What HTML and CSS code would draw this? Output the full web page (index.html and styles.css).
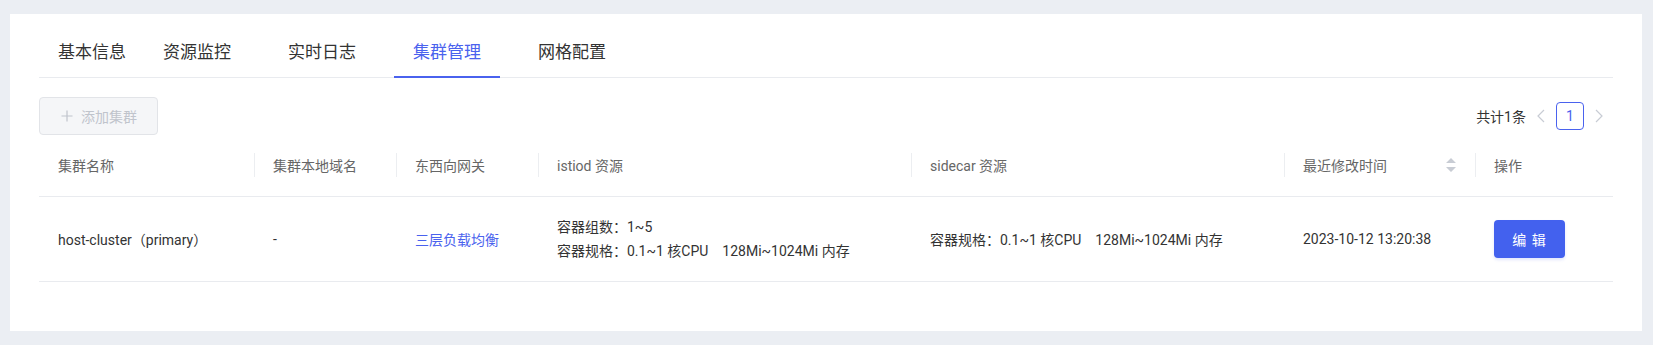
FILE: index.html
```html
<!DOCTYPE html>
<html lang="zh-CN">
<head>
<meta charset="utf-8">
<title>集群管理</title>
<link rel="stylesheet" href="styles.css">
</head>
<body>
<div class="card">
  <div class="tabs">
    <div class="tab">基本信息</div>
    <div class="tab">资源监控</div>
    <div class="tab">实时日志</div>
    <div class="tab active">集群管理</div>
    <div class="tab">网格配置</div>
  </div>
  <div class="toolbar">
    <button class="add-btn" disabled>
      <svg class="plus" width="12" height="12" viewBox="0 0 12 12"><path d="M6 0.5V11.5M0.5 6H11.5" stroke="#c0c4cc" stroke-width="1.2" fill="none"/></svg>
      <span>添加集群</span>
    </button>
    <div class="pager">
      <span class="total">共计1条</span>
      <svg class="chev" width="8" height="14" viewBox="0 0 8 14"><path d="M7 1L1 7L7 13" stroke="#c8ccd4" stroke-width="1.2" fill="none"/></svg>
      <span class="page-num">1</span>
      <svg class="chev" width="8" height="14" viewBox="0 0 8 14"><path d="M1 1L7 7L1 13" stroke="#c8ccd4" stroke-width="1.2" fill="none"/></svg>
    </div>
  </div>
  <table class="grid">
    <colgroup>
      <col class="c1"><col class="c2"><col class="c3"><col class="c4"><col class="c5"><col class="c6"><col class="c7">
    </colgroup>
    <thead>
      <tr>
        <th>集群名称</th>
        <th class="sep">集群本地域名</th>
        <th class="sep">东西向网关</th>
        <th class="sep">istiod 资源</th>
        <th class="sep">sidecar 资源</th>
        <th class="sep"><div class="sortable"><span>最近修改时间</span><svg class="sort" width="10" height="14" viewBox="0 0 10 14"><path d="M5 0L10 5H0Z M0 9H10L5 14Z" fill="#c8ccd4"/></svg></div></th>
        <th class="sep">操作</th>
      </tr>
    </thead>
    <tbody>
      <tr>
        <td>host-cluster（primary）</td>
        <td>-</td>
        <td><a class="link">三层负载均衡</a></td>
        <td><div class="lines"><div>容器组数：1~5</div><div>容器规格：0.1~1 核CPU<span class="mem">128Mi~1024Mi 内存</span></div></div></td>
        <td>容器规格：0.1~1 核CPU<span class="mem">128Mi~1024Mi 内存</span></td>
        <td>2023-10-12 13:20:38</td>
        <td><button class="edit-btn">编 辑</button></td>
      </tr>
    </tbody>
  </table>
</div>
</body>
</html>
```

FILE: styles.css
```css
* { box-sizing: border-box; }
html, body { margin: 0; padding: 0; }
body {
  background: #ebeef3;
  padding: 14px 11px 14px 10px;
  font-family: Roboto, "Noto Sans CJK SC", sans-serif;
  font-size: 14px;
  color: #333;
}
.card {
  background: #fff;
  height: 317px;
  padding: 14px 29px 0 29px;
}
.tabs {
  display: flex;
  gap: 19px;
  border-bottom: 1px solid #e9ebef;
}
.tab {
  height: 50px;
  line-height: 48px;
  padding: 0 19px;
  font-size: 17px;
  color: #333;
  border-bottom: 2px solid transparent;
  margin-bottom: -1px;
}
.tab:first-child { margin-right: -20px; }
.tab.active {
  color: #4a62ee;
  border-bottom-color: #4a62ee;
}
.toolbar {
  margin-top: 19px;
  height: 38px;
  display: flex;
  align-items: center;
  justify-content: space-between;
}
.add-btn {
  height: 38px;
  display: flex;
  align-items: center;
  padding: 0 20px 0 21px;
  background: #f5f6f8;
  border: 1px solid #e2e4e8;
  border-radius: 4px;
  color: #c0c4cc;
  font-family: inherit;
  font-size: 14px;
}
.add-btn .plus { margin-right: 8px; }
.pager {
  display: flex;
  align-items: center;
  gap: 11px;
  padding-right: 10px;
}
.total { font-size: 14px; color: #333; }
.page-num {
  width: 28px;
  height: 28px;
  border: 1px solid #4a62ee;
  border-radius: 4px;
  color: #4a62ee;
  display: flex;
  align-items: center;
  justify-content: center;
  font-size: 14px;
}
.grid {
  width: 100%;
  table-layout: fixed;
  border-collapse: collapse;
}
.c1 { width: 215px; }
.c2 { width: 142px; }
.c3 { width: 142px; }
.c4 { width: 373px; }
.c5 { width: 373px; }
.c6 { width: 191px; }
.c7 { width: 138px; }
.grid th {
  height: 61px;
  text-align: left;
  font-weight: normal;
  color: #666;
  padding: 0 19px;
  border-bottom: 1px solid #e9ebef;
  position: relative;
}
.grid th.sep::before {
  content: "";
  position: absolute;
  left: 0;
  top: 18px;
  height: 24px;
  width: 1px;
  background: #eceef1;
}
.sortable {
  display: flex;
  align-items: center;
  justify-content: space-between;
}
.grid td {
  height: 85px;
  padding: 0 19px;
  border-bottom: 1px solid #e9ebef;
  color: #333;
  vertical-align: middle;
  white-space: nowrap;
}
.lines { line-height: 24px; }
.mem { margin-left: 14px; }
.link { color: #4a62ee; text-decoration: none; }
.edit-btn {
  width: 71px;
  height: 38px;
  border: none;
  border-radius: 4px;
  background: #4361ee;
  color: #fff;
  font-family: inherit;
  font-size: 14px;
  letter-spacing: 1px;
  box-shadow: 0 2px 3px rgba(67, 97, 238, 0.15);
}
```
